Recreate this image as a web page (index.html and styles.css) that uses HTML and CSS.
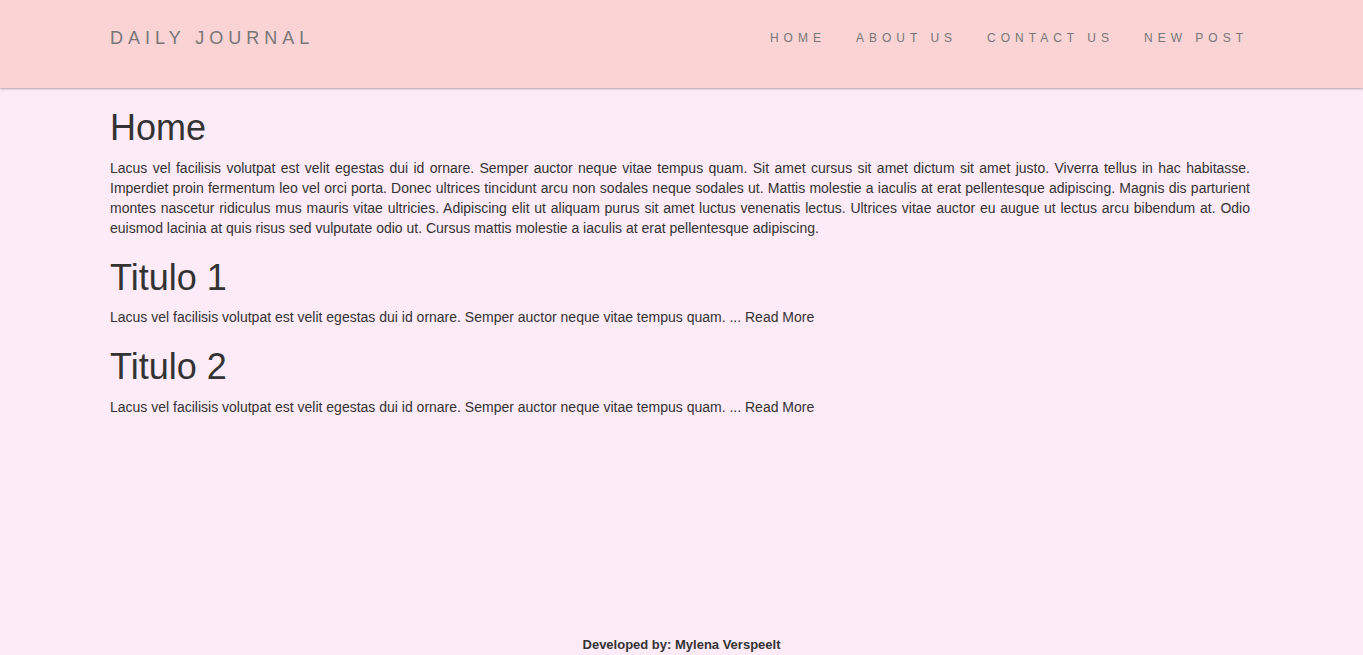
FILE: index.html
```html
<!DOCTYPE html>
<html lang="en">
<head>
<meta charset="utf-8">
<title>Daily Journal</title>
<link rel="stylesheet" href="styles.css">
</head>
<body>
<nav class="navbar">
  <div class="container nav-inner">
    <a class="brand" href="#">DAILY JOURNAL</a>
    <ul class="nav-links">
      <li><a href="#">HOME</a></li>
      <li><a href="#">ABOUT US</a></li>
      <li><a href="#">CONTACT US</a></li>
      <li><a href="#">NEW POST</a></li>
    </ul>
  </div>
</nav>
<main class="main-wrap">
  <div class="container">
    <h1>Home</h1>
    <p class="justify">Lacus vel facilisis volutpat est velit egestas dui id ornare. Semper auctor neque vitae tempus quam. Sit amet cursus sit amet dictum sit amet justo. Viverra tellus in hac habitasse. Imperdiet proin fermentum leo vel orci porta. Donec ultrices tincidunt arcu non sodales neque sodales ut. Mattis molestie a iaculis at erat pellentesque adipiscing. Magnis dis parturient montes nascetur ridiculus mus mauris vitae ultricies. Adipiscing elit ut aliquam purus sit amet luctus venenatis lectus. Ultrices vitae auctor eu augue ut lectus arcu bibendum at. Odio euismod lacinia at quis risus sed vulputate odio ut. Cursus mattis molestie a iaculis at erat pellentesque adipiscing.</p>
    <h1>Titulo 1</h1>
    <p>Lacus vel facilisis volutpat est velit egestas dui id ornare. Semper auctor neque vitae tempus quam. ... <a class="more" href="#">Read More</a></p>
    <h1>Titulo 2</h1>
    <p>Lacus vel facilisis volutpat est velit egestas dui id ornare. Semper auctor neque vitae tempus quam. ... <a class="more" href="#">Read More</a></p>
  </div>
</main>
<footer class="footer">Developed by: Mylena Verspeelt</footer>
</body>
</html>
```

FILE: styles.css
```css
html, body {
  margin: 0;
  padding: 0;
}
body {
  min-height: 100vh;
  display: flex;
  flex-direction: column;
  background: #fdebf7;
  color: #333;
  font-family: "Liberation Sans", Arial, Helvetica, sans-serif;
  font-size: 14px;
  line-height: 20px;
}
.container {
  width: 1140px;
  margin: 0 auto;
  box-sizing: border-box;
}
.navbar {
  background: #fad4d4;
  height: 88px;
  padding-right: 3px;
  box-shadow: 0 1px 2px rgba(0, 0, 0, 0.3);
  position: relative;
  z-index: 1;
}
.nav-inner {
  display: flex;
  align-items: center;
  justify-content: space-between;
  height: 88px;
  padding-bottom: 12px;
}
.brand {
  color: #777;
  text-decoration: none;
  font-size: 18px;
  letter-spacing: 5px;
  line-height: 20px;
}
.nav-links {
  list-style: none;
  display: flex;
  margin: 0 -13px 0 0;
  padding: 0;
}
.nav-links a {
  display: block;
  padding: 0 15px;
  color: #777;
  text-decoration: none;
  font-size: 12px;
  letter-spacing: 5px;
  line-height: 20px;
}
.main-wrap {
  flex: 1;
  padding-right: 3px;
}
h1 {
  font-size: 36px;
  font-weight: normal;
  line-height: 1.1;
  margin: 20px 0 10px;
  color: #333;
}
p {
  margin: 0 0 10px;
}
.justify {
  text-align: justify;
}
.more {
  color: #333;
  text-decoration: none;
}
.footer {
  text-align: center;
  font-weight: bold;
  font-size: 13px;
  line-height: 20px;
}
```
